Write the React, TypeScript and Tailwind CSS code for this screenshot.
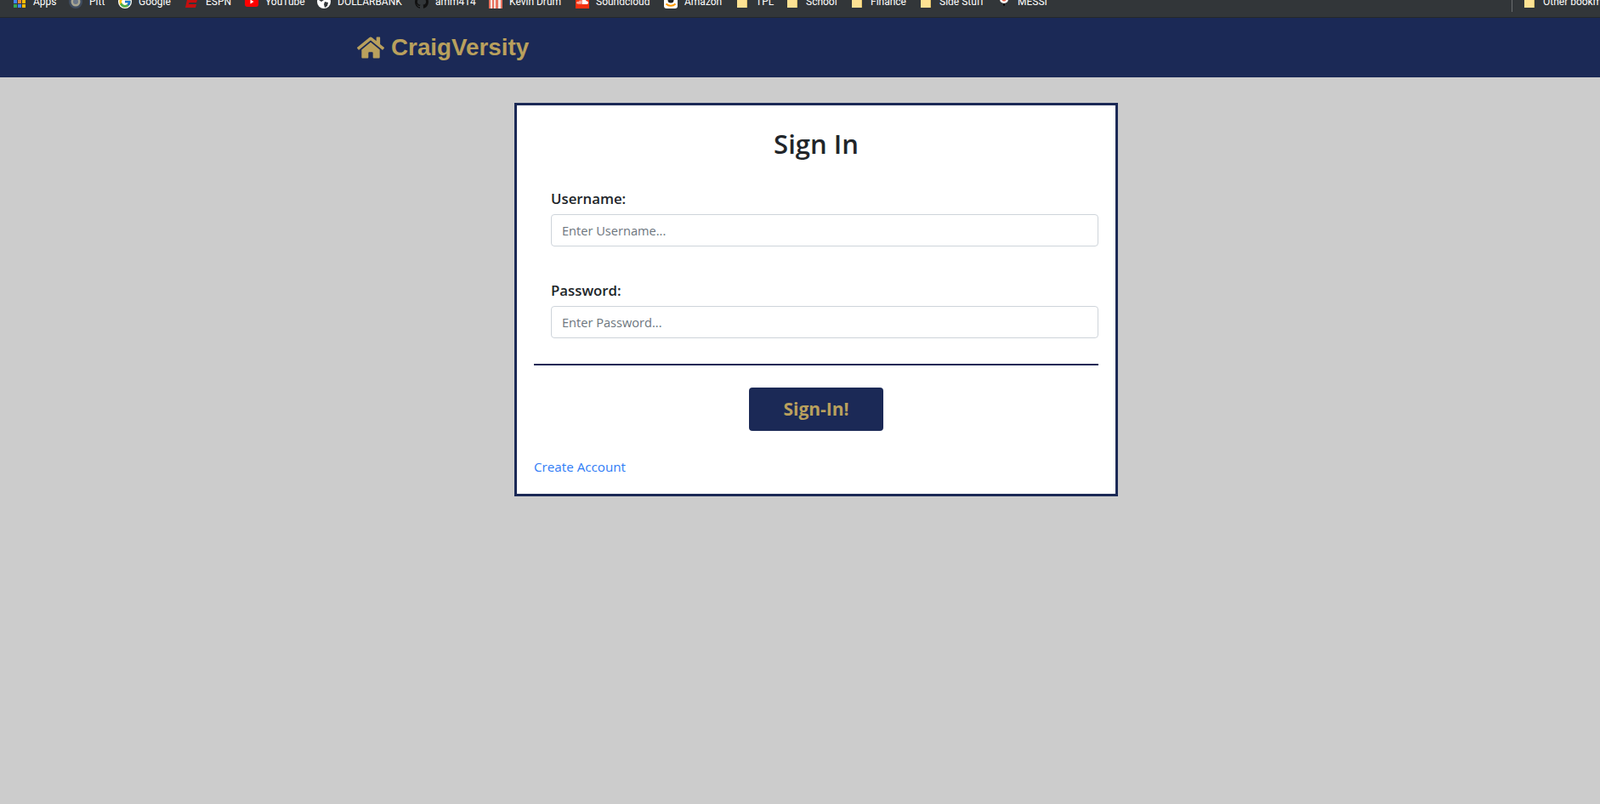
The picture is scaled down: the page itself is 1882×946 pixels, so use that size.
import { FaHome } from "react-icons/fa";
import { FcGoogle } from "react-icons/fc";
import { SiSoundcloud, SiGithub } from "react-icons/si";
import type { ReactNode } from "react";

const Folder = () => (
  <svg width="16" height="16" viewBox="0 0 16 16" className="shrink-0">
    <path d="M2 1h8l4 4v10H2z" fill="#fde293" />
    <path d="M10 1v4h4z" fill="#c9a94f" />
    <path d="M11 5h3v10h-1V6h-2z" fill="#e2c268" />
  </svg>
);

const AppsIcon = () => {
  const colors = ["#ea4335", "#fbbc05", "#4285f4", "#4285f4", "#ea8a35", "#fbbc05", "#34a853", "#4285f4", "#fbbc05"];
  return (
    <div className="grid grid-cols-3 gap-[1px] w-[14px] shrink-0 mr-[1px] ml-[1px]">
      {colors.map((c, i) => (
        <svg key={i} width="4" height="4"><rect width="4" height="4" fill={c} /></svg>
      ))}
    </div>
  );
};

const PittIcon = () => (
  <svg width="16" height="16" viewBox="0 0 16 16" className="shrink-0">
    <circle cx="8" cy="8" r="8" fill="#3f4c5f" />
    <circle cx="8" cy="8" r="5.500" fill="#a7a592" />
    <circle cx="8" cy="8" r="3" fill="#6a7688" />
  </svg>
);

const EspnIcon = () => (
  <svg width="16" height="16" viewBox="0 0 16 16" className="shrink-0">
    <path d="M3 1h13l-1 3H6L5 6h9l-1 3H4.500L4 11h9l-1 4H0z" fill="#c40f0f" />
  </svg>
);

const YoutubeIcon = () => (
  <svg width="16" height="16" viewBox="0 0 16 16" className="shrink-0">
    <rect y="2" width="16" height="12" rx="3" fill="#f00" />
    <path d="M6.500 5.500v5l4-2.500z" fill="#fff" />
  </svg>
);

const GlobeIcon = () => (
  <svg width="16" height="16" viewBox="0 0 16 16" className="shrink-0">
    <circle cx="8" cy="8" r="8" fill="#fff" />
    <path d="M3 2l4 1 1 3-3 2-3-2zM9 8l4 1-1 4-3 2-1-4z" fill="#33373a" />
  </svg>
);

const DrumIcon = () => (
  <svg width="16" height="16" viewBox="0 0 16 16" className="shrink-0">
    <rect width="16" height="16" fill="#e8735f" />
    <path d="M2 16V0h2v16zM6 16V0h2v16zM11 16V0h3v16z" fill="#f6e6e0" />
  </svg>
);

const AmazonIcon = () => (
  <svg width="16" height="16" viewBox="0 0 16 16" className="shrink-0">
    <rect width="16" height="16" rx="3" fill="#fff" />
    <circle cx="8" cy="6" r="3.500" fill="#222" />
    <path d="M2.500 10.500c3 3 8 3 11 0" stroke="#f90" strokeWidth="2" fill="none" />
  </svg>
);

const MessiIcon = () => (
  <svg width="16" height="16" viewBox="0 0 16 16" className="shrink-0">
    <circle cx="8" cy="5" r="5" fill="#fff" />
    <circle cx="8" cy="5" r="2.500" fill="#e2583e" />
    <rect x="7" y="10" width="2" height="3" fill="#111" />
  </svg>
);

const bookmarks: { icon: ReactNode; label: string; width: string }[] = [
  { icon: <AppsIcon />, label: "Apps", width: "w-[26px]" },
  { icon: <PittIcon />, label: "Pitt", width: "w-[18px]" },
  { icon: <FcGoogle size={16} className="shrink-0 bg-white rounded-full" />, label: "Google", width: "w-[39px]" },
  { icon: <EspnIcon />, label: "ESPN", width: "w-[30px]" },
  { icon: <YoutubeIcon />, label: "YouTube", width: "w-[45px]" },
  { icon: <GlobeIcon />, label: "DOLLARBANK", width: "w-[75px]" },
  { icon: <SiGithub size={16} className="shrink-0 text-[#111]" />, label: "amm414", width: "w-[47px]" },
  { icon: <DrumIcon />, label: "Kevin Drum", width: "w-[62px]" },
  { icon: <span className="shrink-0 w-4 h-4 bg-[#f5300f] flex items-center justify-center"><SiSoundcloud size={14} className="text-white" /></span>, label: "Soundcloud", width: "w-[64px]" },
  { icon: <AmazonIcon />, label: "Amazon", width: "w-[44px]" },
  { icon: <Folder />, label: "TPL", width: "w-[19px]" },
  { icon: <Folder />, label: "School", width: "w-[36px]" },
  { icon: <Folder />, label: "Finance", width: "w-[41px]" },
  { icon: <Folder />, label: "Side Stuff", width: "w-[52px]" },
  { icon: <MessiIcon />, label: "MESSI", width: "w-[33px]" },
];

const Bookmark = ({ icon, label, width }: { icon: ReactNode; label: string; width?: string }) => (
  <div className="flex items-center gap-2 shrink-0">
    {icon}
    <span className={`${width ?? ""} whitespace-nowrap text-[12px] text-white`}>{label}</span>
  </div>
);

export default function App() {
  return (
    <div className="min-h-[946px] bg-[#cccccc] font-['Open_Sans',sans-serif]">
      <div className="h-[21px] bg-[#323639] overflow-hidden border-b border-[#24272a] font-['Roboto',sans-serif]">
        <div className="flex items-center justify-between h-6 -mt-[10px] pl-[15px]">
          <div className="flex items-center gap-4">
            {bookmarks.map((b) => (
              <Bookmark key={b.label} {...b} />
            ))}
          </div>
          <div className="flex items-center w-[104px] shrink-0">
            <div className="w-px h-6 shrink-0 bg-[#6b6e70] mr-3" />
            <Bookmark icon={<Folder />} label="Other bookmarks" />
          </div>
        </div>
      </div>

      <nav className="h-[70px] bg-[#1b2956] flex items-center pl-[420px]">
        <a className="flex items-center gap-[8px] text-[#b9a05d] font-bold text-[27.8px] font-['Liberation_Sans',sans-serif]">
          <FaHome size={32} />
          CraigVersity
        </a>
      </nav>

      <main className="flex justify-center pt-[30px]">
        <div className="w-[710px] h-[463px] bg-white border-[3px] border-[#1b2956] px-5 ml-[38px]">
          <h1 className="text-center text-[31px] leading-[38px] font-semibold text-[#212529] mt-[26px] mb-[34px]">Sign In</h1>

          <form>
            <div className="pl-5 mb-[40px]">
              <label className="block text-[16.8px] leading-6 font-semibold text-[#212529] mb-[6px]">Username:</label>
              <input
                placeholder="Enter Username..."
                className="block w-full h-[38px] px-3 text-[14.6px] bg-white border border-[#ced4da] rounded placeholder:text-[#6c757d]"
              />
            </div>
            <div className="pl-5 mb-[30px]">
              <label className="block text-[16.8px] leading-6 font-semibold text-[#212529] mb-[6px]">Password:</label>
              <input
                placeholder="Enter Password..."
                className="block w-full h-[38px] px-3 text-[14.6px] bg-white border border-[#ced4da] rounded placeholder:text-[#6c757d]"
              />
            </div>
            <hr className="border-t-2 border-[#1b2956]" />
            <div className="flex justify-center mt-[26px]">
              <button type="button" className="w-[158px] h-[51px] pt-[1px] bg-[#1b2956] text-[#b9a05d] rounded font-bold text-[21px]">
                Sign-In!
              </button>
            </div>
          </form>

          <a className="block mt-[30px] text-[15.2px] leading-6 text-[#2f7cf6]">Create Account</a>
        </div>
      </main>
    </div>
  );
}
